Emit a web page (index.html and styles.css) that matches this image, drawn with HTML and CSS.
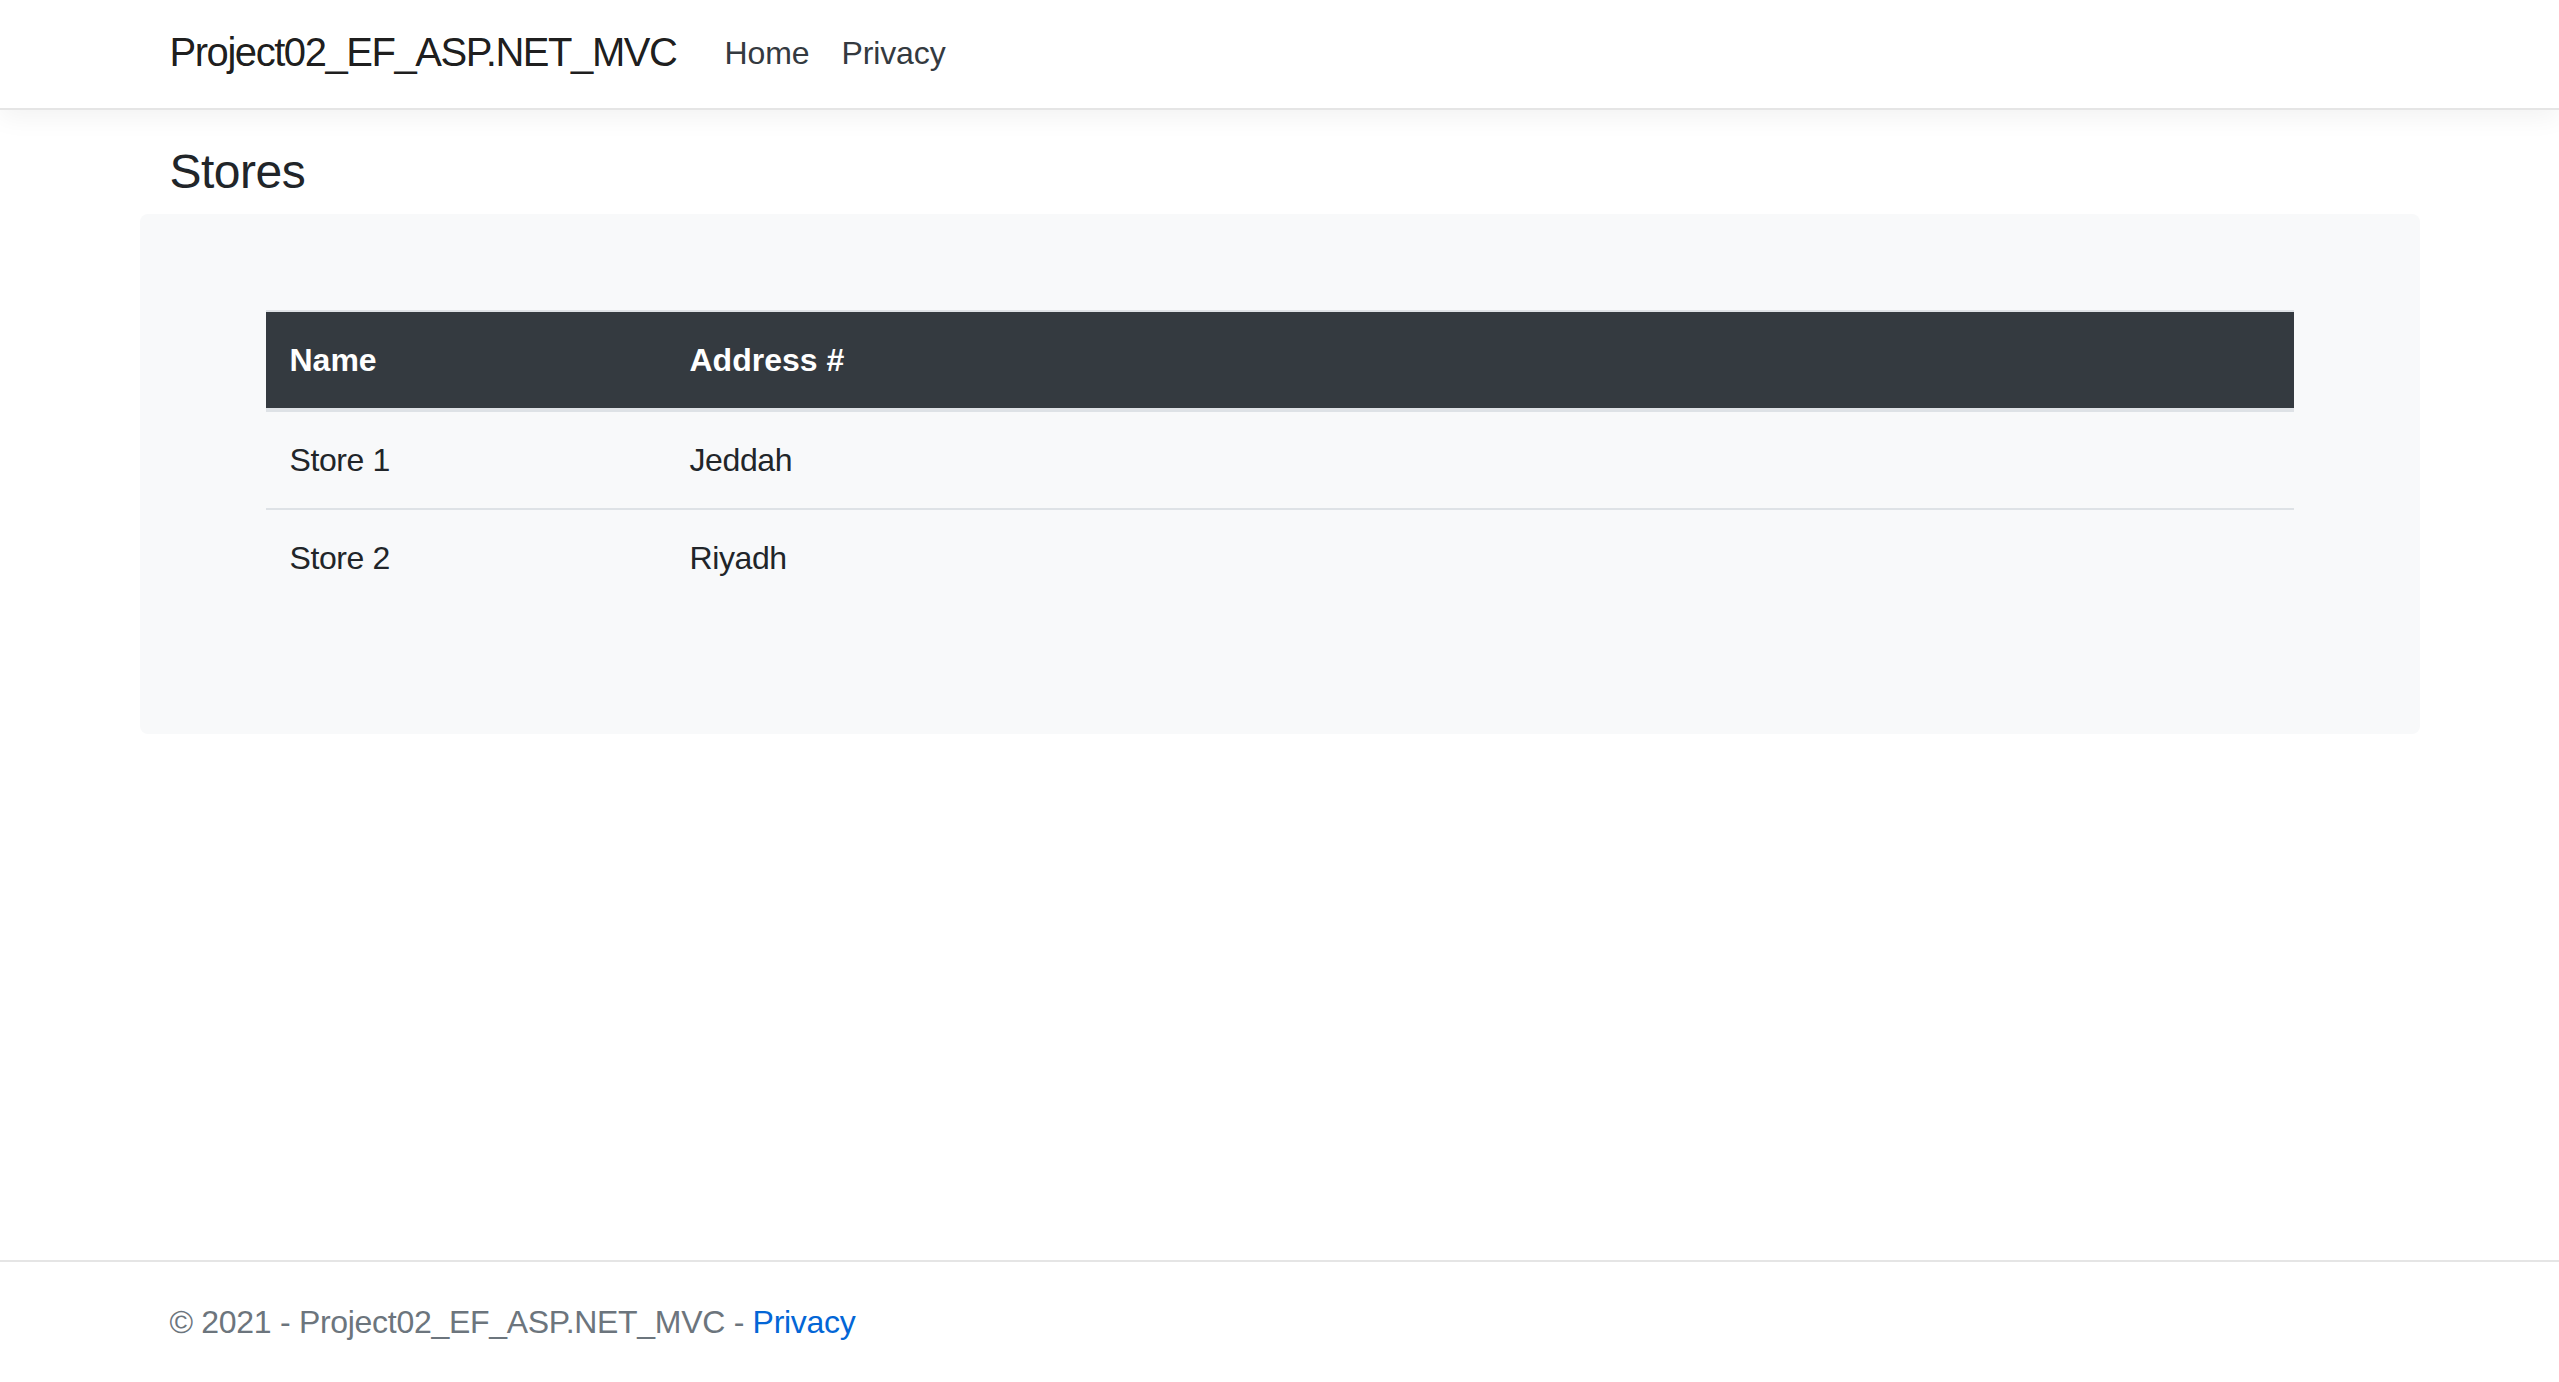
FILE: index.html
```html
<!DOCTYPE html>
<html lang="en">
<head>
<meta charset="utf-8">
<title>Stores - Project02_EF_ASP.NET_MVC</title>
<link rel="stylesheet" href="styles.css">
</head>
<body>
<header class="navbar">
  <div class="container nav-inner">
    <a class="brand" href="#">Project02_EF_ASP.NET_MVC</a>
    <nav class="nav-links">
      <a class="nav-link" href="#">Home</a>
      <a class="nav-link" href="#">Privacy</a>
    </nav>
  </div>
</header>
<main class="container main">
  <h4 class="page-title">Stores</h4>
  <div class="panel">
    <table class="table">
      <thead>
        <tr><th class="col-name">Name</th><th>Address #</th></tr>
      </thead>
      <tbody>
        <tr><td>Store 1</td><td>Jeddah</td></tr>
        <tr><td>Store 2</td><td>Riyadh</td></tr>
      </tbody>
    </table>
  </div>
</main>
<footer class="footer">
  <div class="container">&copy; 2021 - Project02_EF_ASP.NET_MVC - <a class="footer-link" href="#">Privacy</a></div>
</footer>
</body>
</html>
```
FILE: styles.css
```css
* { box-sizing: border-box; }
html, body { margin: 0; padding: 0; }
body {
  font-family: "Liberation Sans", Arial, sans-serif;
  font-size: 32px;
  line-height: 1.5;
  color: #212529;
  background: #fff;
  min-height: 100vh;
  display: flex;
  flex-direction: column;
}
a { text-decoration: none; }
.container {
  width: 100%;
  max-width: 2280px;
  margin: 0 auto;
  padding: 0 30px;
}
.navbar {
  background: #fff;
  border-bottom: 2px solid #e5e5e5;
  box-shadow: 0 8px 24px rgba(0,0,0,.05);
  padding: 14px 0;
  margin-bottom: 33px;
}
.nav-inner { display: flex; align-items: center; }
.brand {
  font-size: 40px;
  line-height: 60px;
  padding: 8px 0 12px;
  margin-right: 32px;
  color: rgba(0,0,0,.9);
  letter-spacing: -1.45px;
}
.nav-links { display: flex; }
.nav-link {
  padding: 15px 16px 17px;
  color: #343a40;
  line-height: 48px;
  letter-spacing: -0.1px;
}
.main { flex: 1 0 auto; }
.page-title {
  margin: 0 0 13px;
  font-size: 48px;
  font-weight: 500;
  line-height: 1.2;
  letter-spacing: -0.5px;
}
.panel {
  background: #f8f9fa;
  border-radius: 8px;
  margin: 0 -30px;
  padding: 96px 126px;
}
.table {
  width: 100%;
  border-collapse: collapse;
  margin-bottom: 32px;
  color: #212529;
}
.table th, .table td {
  padding: 24px;
  text-align: left;
  vertical-align: top;
  border-top: 2px solid #dee2e6;
  letter-spacing: -0.4px;
}
.table thead th {
  background: #343a40;
  color: #fff;
  font-weight: 700;
  letter-spacing: 0;
  border-bottom: 4px solid #dee2e6;
}
.col-name { width: 400px; }
.footer {
  border-top: 2px solid #e5e5e5;
  line-height: 120px;
  white-space: nowrap;
  color: #6c757d;
  letter-spacing: -0.3px;
}
.footer-link { color: #0366d6; }
```
